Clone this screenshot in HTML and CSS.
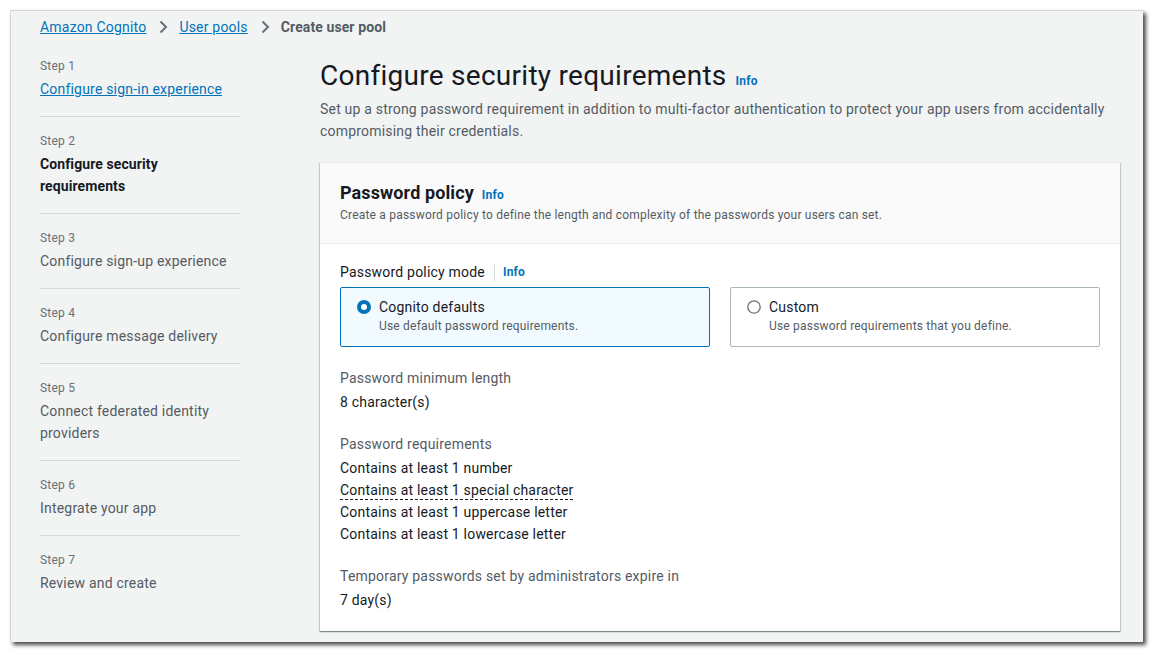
FILE: index.html
```html
<!DOCTYPE html>
<html lang="en">
<head>
<meta charset="utf-8">
<title>Create user pool</title>
<link rel="stylesheet" href="styles.css">
</head>
<body>
<div class="frame">
  <div class="window">
    <nav class="breadcrumbs">
      <a class="crumb-link" href="#">Amazon Cognito</a>
      <svg class="chev" width="16" height="16" viewBox="0 0 16 16"><path d="M5.5 2.5l5.5 5.5-5.5 5.5"/></svg>
      <a class="crumb-link" href="#">User pools</a>
      <svg class="chev" width="16" height="16" viewBox="0 0 16 16"><path d="M5.5 2.5l5.5 5.5-5.5 5.5"/></svg>
      <span class="crumb-current">Create user pool</span>
    </nav>
    <div class="layout">
      <ol class="steps">
        <li class="step"><span class="step-num">Step 1</span><a class="step-title step-link" href="#">Configure sign-in experience</a></li>
        <li class="step"><span class="step-num">Step 2</span><span class="step-title step-current">Configure security requirements</span></li>
        <li class="step"><span class="step-num">Step 3</span><span class="step-title">Configure sign-up experience</span></li>
        <li class="step"><span class="step-num">Step 4</span><span class="step-title">Configure message delivery</span></li>
        <li class="step"><span class="step-num">Step 5</span><span class="step-title">Connect federated identity providers</span></li>
        <li class="step"><span class="step-num">Step 6</span><span class="step-title">Integrate your app</span></li>
        <li class="step"><span class="step-num">Step 7</span><span class="step-title">Review and create</span></li>
      </ol>
      <main class="main">
        <h1 class="page-title">Configure security requirements<a class="info info-h1" href="#">Info</a></h1>
        <p class="page-desc">Set up a strong password requirement in addition to multi-factor authentication to protect your app users from accidentally compromising their credentials.</p>
        <section class="card">
          <header class="card-header">
            <h2 class="card-title">Password policy<a class="info info-h2" href="#">Info</a></h2>
            <p class="card-desc">Create a password policy to define the length and complexity of the passwords your users can set.</p>
          </header>
          <div class="card-body">
            <div class="field-label">Password policy mode<a class="info info-divided" href="#">Info</a></div>
            <div class="tiles">
              <div class="tile tile-selected">
                <svg class="radio" width="14" height="14" viewBox="0 0 14 14"><circle cx="7" cy="7" r="5" fill="#fff" stroke="#0073bb" stroke-width="4"/></svg>
                <div class="tile-text">
                  <div class="tile-label">Cognito defaults</div>
                  <div class="tile-desc">Use default password requirements.</div>
                </div>
              </div>
              <div class="tile">
                <svg class="radio" width="14" height="14" viewBox="0 0 14 14"><circle cx="7" cy="7" r="6.2" fill="#fff" stroke="#687078" stroke-width="1.3"/></svg>
                <div class="tile-text">
                  <div class="tile-label">Custom</div>
                  <div class="tile-desc">Use password requirements that you define.</div>
                </div>
              </div>
            </div>
            <div class="kv">
              <div class="kv-label">Password minimum length</div>
              <div class="kv-value">8 character(s)</div>
            </div>
            <div class="kv">
              <div class="kv-label">Password requirements</div>
              <div class="kv-value">Contains at least 1 number</div>
              <div class="kv-value"><span class="dashed">Contains at least 1 special character</span></div>
              <div class="kv-value">Contains at least 1 uppercase letter</div>
              <div class="kv-value">Contains at least 1 lowercase letter</div>
            </div>
            <div class="kv">
              <div class="kv-label">Temporary passwords set by administrators expire in</div>
              <div class="kv-value">7 day(s)</div>
            </div>
          </div>
        </section>
      </main>
    </div>
  </div>
</div>
</body>
</html>
```
FILE: styles.css
```css
* { box-sizing: border-box; }
html, body { margin: 0; padding: 0; background: #ffffff; }
body {
  font-family: Roboto, "Open Sans", Arial, sans-serif;
  font-size: 14px;
  line-height: 22px;
  color: #16191f;
  letter-spacing: 0.2px;
}
a { color: #0073bb; }

.frame { padding: 10px; }
.window {
  width: 1133px;
  height: 632px;
  background: #f2f3f3;
  border-top: 1px solid #d3d6d6;
  border-left: 1px solid #d3d6d6;
  box-shadow: 3px 3px 4px rgba(0, 0, 0, 0.7);
  padding: 5px 0 0 29px;
  overflow: hidden;
}

.breadcrumbs { display: flex; align-items: center; height: 22px; }
.crumb-link { color: #0073bb; text-decoration: underline; }
.chev { margin: 0 8px 0 9px; fill: none; stroke: #687078; stroke-width: 2; }
.crumb-current { color: #545b64; font-weight: 700; letter-spacing: 0.1px; }

.layout { display: flex; gap: 80px; margin-top: 20px; }

.steps { list-style: none; margin: 0; padding: 0; width: 200px; flex: none; }
.step { padding: 16px 0; border-bottom: 1px solid #d5dbdb; }
.step:first-child { padding-top: 0; }
.step:last-child { border-bottom: none; }
.step-num { display: block; font-size: 12px; line-height: 16px; color: #687078; margin-bottom: 4px; }
.step-title { display: block; color: #545b64; }
.step-link { color: #0073bb; text-decoration: underline; }
.step-current { color: #16191f; font-weight: 700; letter-spacing: 0.1px; }

.main { width: 800px; flex: none; }
.page-title { margin: 0; font-size: 28px; line-height: 36px; font-weight: 400; letter-spacing: 0.27px; color: #16191f; }
.info { font-size: 12px; line-height: 16px; font-weight: 700; color: #0073bb; text-decoration: none; letter-spacing: 0.2px; }
.info-h1 { margin-left: 9px; }
.info-h2 { margin-left: 8px; }
.page-desc { margin: 4px 0 0; color: #545b64; }

.card {
  margin-top: 20px;
  background: #ffffff;
  border-top: 1px solid #eaeded;
  box-shadow: 0 1px 1px 0 rgba(0, 28, 36, 0.3), 1px 1px 1px 0 rgba(0, 28, 36, 0.15), -1px 1px 1px 0 rgba(0, 28, 36, 0.15);
}
.card-header { background: #fafafa; padding: 19px 20px 20px; border-bottom: 1px solid #eaeded; }
.card-title { margin: 0; font-size: 18px; line-height: 22px; font-weight: 700; letter-spacing: 0.1px; }
.card-desc { margin: 3px 0 0; font-size: 12px; line-height: 16px; color: #545b64; }
.card-body { padding: 17px 20px 20px; }

.field-label { display: flex; align-items: center; height: 22px; }
.info-divided { display: flex; align-items: center; height: 17px; border-left: 1px solid #d5dbdb; margin-left: 9px; padding-left: 8px; }

.tiles { display: grid; grid-template-columns: 1fr 1fr; gap: 20px; margin-top: 4px; }
.tile {
  display: flex;
  align-items: flex-start;
  gap: 8px;
  border: 1px solid #aab7b8;
  border-radius: 2px;
  background: #ffffff;
  padding: 8px 16px 12px;
}
.tile-selected { border-color: #0073bb; background: #f1faff; }
.radio { flex: none; margin-top: 4px; }
.tile-label { color: #16191f; }
.tile-desc { font-size: 12px; line-height: 16px; color: #545b64; }

.kv { margin-top: 20px; }
.kv-label { color: #545b64; margin-bottom: 2px; }
.kv-value { color: #16191f; }
.dashed { text-decoration: underline dashed #16191f; text-decoration-thickness: 1px; text-underline-offset: 4px; }
```
